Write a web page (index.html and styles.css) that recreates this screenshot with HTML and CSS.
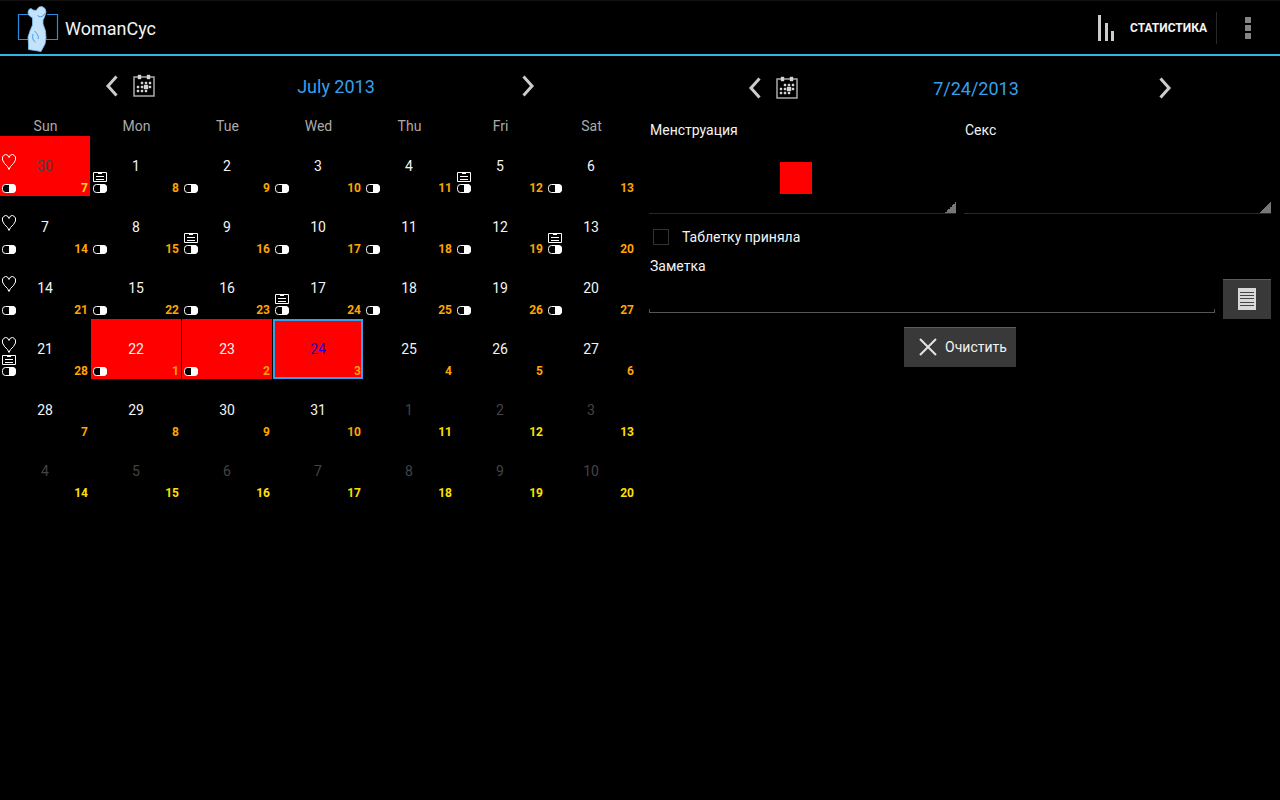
FILE: index.html
```html
<!DOCTYPE html>
<html lang="ru">
<head>
<meta charset="utf-8">
<title>WomanCyc</title>
<link rel="stylesheet" href="styles.css">
</head>
<body>
<svg class="sprite" aria-hidden="true">
  <symbol id="heart" viewBox="0 0 14 16"><path d="M7 15.500 5.500 12.500 2.500 9.500 .5 6V3L2 1.200 3.500.5 5.500 1 7 3.500 8.500 1 10.500.5 12 1.200 13.500 3v3l-2 3.500-3 3z" fill="none" stroke="#fff"/></symbol>
  <symbol id="note" viewBox="0 0 14 10"><path d="M.5.5h13v9H.5zM3 4.500h8M3 7.500h8M5 1.500h4" fill="none" stroke="#fff"/></symbol>
  <symbol id="pill" viewBox="0 0 14 9"><rect x=".5" y=".5" width="13" height="8" rx="3" fill="#000" stroke="#fff"/><path d="M7 0h4l2 1 1 2v3l-1 2-2 1H7z" fill="#fff"/></symbol>
  <symbol id="prev" viewBox="0 0 32 32"><path d="M20.500 6.500 12 16l8.500 9.500" fill="none" stroke="#ccc" stroke-width="3"/></symbol>
  <symbol id="next" viewBox="0 0 32 32"><path d="M11.500 6.500 20 16l-8.500 9.500" fill="none" stroke="#ccc" stroke-width="3"/></symbol>
  <symbol id="month" viewBox="0 0 32 32"><path d="M6 7h20v19H6z" fill="none" stroke="#aaa" stroke-width="1.500"/><path d="M10 5h3v4h-3zM19 5h3v4h-3zM13 12h2v2h-2zM17 12h2v2h-2zM21 12h2v2h-2zM9 16h2v2H9zM13 16h2v2h-2zM16 15h4v4h-4zM21 16h2v2h-2zM9 20h2v2H9zM13 20h2v2h-2zM17 20h2v2h-2z" fill="#d4d4d4" stroke="#d4d4d4" stroke-width=".4"/></symbol>
</svg>
<header class="bar">
  <svg class="logo" viewBox="0 0 50 52" aria-hidden="true">
    <path d="M14 12.500H4.500v25H14M33 12.500h10.500v25H32" fill="none" stroke="#2a8be0" stroke-width="1.200"/>
    <path d="M15 7.500 17 6.500 19 8 22 8.500 25 5 28 4.500 31 6.500 32 10 30.500 15 29 18 29 22 31.500 29 32 36 31 42 27 49.500 21 48.500 14.500 47.500 14.500 42 14 35 16 29 18.500 23 18.500 16 14.500 13 14 10z" fill="#c3e2fb" stroke="#7fc0f5" stroke-width=".8" stroke-linejoin="round"/>
    <path d="M23.500 13.500 26 15l3-1 1.500-2.500M19 32q-1.500 6 2.500 8M20.500 29q5 5 3.500 8" fill="none" stroke="#419de8"/>
  </svg>
  <h1 class="app-name">WomanCyc</h1>
  <button class="stats" type="button"><svg width="20" height="28" viewBox="0 0 20 28" aria-hidden="true"><path d="M1 1h3v26H1zM8 9h3v18H8zM14 17h3v10h-3z" fill="#ccc"/></svg>Статистика</button>
  <button class="more" type="button" aria-label="Меню"><svg width="6" height="22" viewBox="0 0 6 22" aria-hidden="true"><path d="M0 0h6v6H0zM0 8h6v6H0zM0 16h6v6H0z" fill="#858585"/></svg></button>
</header>
<main class="panes">
<section class="calendar">
  <div class="nav">
    <button type="button" aria-label="Назад"><svg><use href="#prev"/></svg></button>
    <button type="button" aria-label="Сегодня"><svg><use href="#month"/></svg></button>
    <h2>July 2013</h2>
    <button type="button" aria-label="Вперёд"><svg><use href="#next"/></svg></button>
  </div>
  <div class="month-wrap">
  <table class="month">
    <thead><tr><th>Sun</th><th>Mon</th><th>Tue</th><th>Wed</th><th>Thu</th><th>Fri</th><th>Sat</th></tr></thead>
    <tbody>
    <tr>
      <td><button class="day red other"><svg class="heart"><use href="#heart"/></svg><svg class="pill"><use href="#pill"/></svg><b>30</b><i>7</i></button></td>
      <td><button class="day"><svg class="note"><use href="#note"/></svg><svg class="pill"><use href="#pill"/></svg><b>1</b><i>8</i></button></td>
      <td><button class="day"><svg class="pill"><use href="#pill"/></svg><b>2</b><i>9</i></button></td>
      <td><button class="day"><svg class="pill"><use href="#pill"/></svg><b>3</b><i>10</i></button></td>
      <td><button class="day"><svg class="pill"><use href="#pill"/></svg><b>4</b><i>11</i></button></td>
      <td><button class="day"><svg class="note"><use href="#note"/></svg><svg class="pill"><use href="#pill"/></svg><b>5</b><i>12</i></button></td>
      <td><button class="day"><svg class="pill"><use href="#pill"/></svg><b>6</b><i>13</i></button></td>
    </tr>
    <tr>
      <td><button class="day"><svg class="heart"><use href="#heart"/></svg><svg class="pill"><use href="#pill"/></svg><b>7</b><i>14</i></button></td>
      <td><button class="day"><svg class="pill"><use href="#pill"/></svg><b>8</b><i>15</i></button></td>
      <td><button class="day"><svg class="note"><use href="#note"/></svg><svg class="pill"><use href="#pill"/></svg><b>9</b><i>16</i></button></td>
      <td><button class="day"><svg class="pill"><use href="#pill"/></svg><b>10</b><i>17</i></button></td>
      <td><button class="day"><svg class="pill"><use href="#pill"/></svg><b>11</b><i>18</i></button></td>
      <td><button class="day"><svg class="pill"><use href="#pill"/></svg><b>12</b><i>19</i></button></td>
      <td><button class="day"><svg class="note"><use href="#note"/></svg><svg class="pill"><use href="#pill"/></svg><b>13</b><i>20</i></button></td>
    </tr>
    <tr>
      <td><button class="day"><svg class="heart"><use href="#heart"/></svg><svg class="pill"><use href="#pill"/></svg><b>14</b><i>21</i></button></td>
      <td><button class="day"><svg class="pill"><use href="#pill"/></svg><b>15</b><i>22</i></button></td>
      <td><button class="day"><svg class="pill"><use href="#pill"/></svg><b>16</b><i>23</i></button></td>
      <td><button class="day"><svg class="note"><use href="#note"/></svg><svg class="pill"><use href="#pill"/></svg><b>17</b><i>24</i></button></td>
      <td><button class="day"><svg class="pill"><use href="#pill"/></svg><b>18</b><i>25</i></button></td>
      <td><button class="day"><svg class="pill"><use href="#pill"/></svg><b>19</b><i>26</i></button></td>
      <td><button class="day"><svg class="pill"><use href="#pill"/></svg><b>20</b><i>27</i></button></td>
    </tr>
    <tr>
      <td><button class="day"><svg class="heart"><use href="#heart"/></svg><svg class="note"><use href="#note"/></svg><svg class="pill"><use href="#pill"/></svg><b>21</b><i>28</i></button></td>
      <td><button class="day red"><svg class="pill"><use href="#pill"/></svg><b>22</b><i>1</i></button></td>
      <td><button class="day red"><svg class="pill"><use href="#pill"/></svg><b>23</b><i>2</i></button></td>
      <td><button class="day red selected"><b>24</b><i>3</i></button></td>
      <td><button class="day"><b>25</b><i>4</i></button></td>
      <td><button class="day"><b>26</b><i>5</i></button></td>
      <td><button class="day"><b>27</b><i>6</i></button></td>
    </tr>
    <tr>
      <td><button class="day"><b>28</b><i>7</i></button></td>
      <td><button class="day"><b>29</b><i>8</i></button></td>
      <td><button class="day"><b>30</b><i>9</i></button></td>
      <td><button class="day"><b>31</b><i>10</i></button></td>
      <td><button class="day other"><b>1</b><i>11</i></button></td>
      <td><button class="day other"><b>2</b><i>12</i></button></td>
      <td><button class="day other"><b>3</b><i>13</i></button></td>
    </tr>
    <tr>
      <td><button class="day other"><b>4</b><i>14</i></button></td>
      <td><button class="day other"><b>5</b><i>15</i></button></td>
      <td><button class="day other"><b>6</b><i>16</i></button></td>
      <td><button class="day other"><b>7</b><i>17</i></button></td>
      <td><button class="day other"><b>8</b><i>18</i></button></td>
      <td><button class="day other"><b>9</b><i>19</i></button></td>
      <td><button class="day other"><b>10</b><i>20</i></button></td>
    </tr>
    </tbody>
  </table>
  </div>
</section>
<section class="details">
  <div class="nav">
    <button type="button" aria-label="Назад"><svg><use href="#prev"/></svg></button>
    <button type="button" aria-label="Сегодня"><svg><use href="#month"/></svg></button>
    <h2>7/24/2013</h2>
    <button type="button" aria-label="Вперёд"><svg><use href="#next"/></svg></button>
  </div>
  <form class="form">
    <div class="pair">
      <div class="field"><label for="flow">Менструация</label><select id="flow" class="spinner swatch"><option></option></select></div>
      <div class="field"><label for="sex">Секс</label><select id="sex" class="spinner"><option></option></select></div>
    </div>
    <label class="check"><input type="checkbox">Таблетку приняла</label>
    <label class="note-label" for="memo">Заметка</label>
    <div class="memo-row">
      <input id="memo" class="memo" type="text">
      <button class="grey list" type="button" aria-label="Открыть заметку"><svg width="18" height="22" viewBox="0 0 18 22" aria-hidden="true"><path d="M0 0h18v22H0z" fill="#d8d8d8"/><path d="M2 4.500h14M2 7.500h14M2 10.500h14M2 14.500h14M2 17.500h14" stroke="#444"/></svg></button>
    </div>
    <button class="grey clear" type="button"><svg width="18" height="18" viewBox="0 0 18 18" aria-hidden="true"><path d="M1 1l16 16M17 1 1 17" stroke="#e4e4e4" stroke-width="2"/></svg>Очистить</button>
  </form>
</section>
</main>
</body>
</html>
```
FILE: styles.css
```css
* { box-sizing: border-box; }
body {
  margin: 0;
  min-height: 100vh;
  background: #000;
  color: #f3f3f3;
  font: 14px/20px Roboto, "Noto Sans", sans-serif;
}
button, input, select { font: inherit; color: inherit; margin: 0; }
button { padding: 0; border: 0; background: none; cursor: pointer; }
.sprite { display: none; }

.bar {
  display: flex;
  align-items: center;
  height: 56px;
  padding-left: 14px;
  border-top: 1px solid #111;
  border-bottom: 2px solid #33b5e5;
}
.logo { width: 50px; height: 52px; }
.app-name { flex: 1; margin: 0 0 0 1px; padding-top: 2px; font-size: 18px; font-weight: 400; line-height: 24px; }
.stats {
  display: flex;
  align-items: center;
  gap: 13px;
  height: 32px;
  padding-right: 9px;
  border-right: 1px solid #282828;
  font-size: 12px;
  font-weight: 700;
  text-transform: uppercase;
}
.more { display: flex; justify-content: center; align-items: center; width: 63px; height: 48px; padding-right: 2px; }

.panes { display: grid; grid-template-columns: 1fr 1fr; }
.nav { display: flex; align-items: center; height: 60px; padding: 0 96px; }
.nav button, .nav svg { display: block; width: 32px; height: 32px; }
.nav h2 {
  flex: 1;
  margin: 0;
  padding-top: 2px;
  color: #33a0ee;
  font-size: 18px;
  font-weight: 400;
  line-height: 24px;
  text-align: center;
}
.month-wrap { padding-right: 3px; }
.month { width: 100%; table-layout: fixed; border-collapse: collapse; }
.month th { height: 20px; padding: 0; color: #aaa; font-weight: 400; }
.month td { padding: 0 1px 1px 0; }
.day {
  display: grid;
  grid-template-columns: 16px 1fr 16px;
  grid-template-rows: 16px 10px 9px;
  row-gap: 2px;
  width: 100%;
  height: 60px;
  padding: 18px 2px 3px;
}
.day svg { grid-column: 1; width: 14px; height: 100%; }
.heart { grid-row: 1; }
.note { grid-row: 2; }
.pill { grid-row: 3; }
.day b { grid-area: 1 / 2 / 3 / 3; font-weight: 400; line-height: 24px; }
.day i {
  grid-area: 2 / 3 / 4 / 4;
  align-self: end;
  justify-self: end;
  color: #ffa500;
  font-size: 12px;
  font-style: normal;
  font-weight: 700;
  line-height: 10px;
}
.red { background: #f00; }
.other b { color: #444; }
.other i { color: #ffe000; }
.selected { box-shadow: inset 0 0 0 2px #33a0ee; }
.selected b { color: #2200dd; }

.details .nav { height: 64px; padding: 0 99px; }
.form { display: flex; flex-direction: column; padding: 0 9px; }
.pair { display: grid; grid-template-columns: 1fr 1fr; gap: 8px; }
.field label, .note-label { display: block; padding-left: 1px; }
.spinner {
  display: block;
  width: 100%;
  height: 74px;
  border: 0;
  border-bottom: 1px solid #282828;
  border-radius: 0;
  appearance: none;
  background: linear-gradient(135deg, transparent 50%, #777 50%) right bottom / 12px 12px no-repeat border-box;
}
.swatch {
  background:
    linear-gradient(135deg, transparent 50%, #777 50%) right bottom / 12px 12px no-repeat border-box,
    linear-gradient(#f00, #f00) calc(50% - 7px) 22px / 32px 32px no-repeat;
}
.check { display: flex; align-items: center; gap: 13px; height: 32px; margin-top: 7px; padding-left: 4px; }
.check input { appearance: none; width: 16px; height: 16px; border: 1px solid #333; }
.note-label { margin-top: 3px; }
.memo-row { display: flex; gap: 8px; margin-top: 3px; }
.memo {
  flex: 1;
  height: 34px;
  border: 0;
  background:
    linear-gradient(#555, #555) left bottom / 1px 4px no-repeat,
    linear-gradient(#555, #555) right bottom / 1px 4px no-repeat,
    linear-gradient(#555, #555) left bottom / 100% 1px no-repeat;
}
.grey {
  display: flex;
  align-items: center;
  justify-content: center;
  height: 40px;
  padding-bottom: 1px;
  border-top: 1px solid #5c5c5c;
  background: #393939;
}
.list { width: 48px; }
.clear { align-self: center; gap: 8px; margin-top: 8px; padding: 0 9px 1px 15px; }
```
